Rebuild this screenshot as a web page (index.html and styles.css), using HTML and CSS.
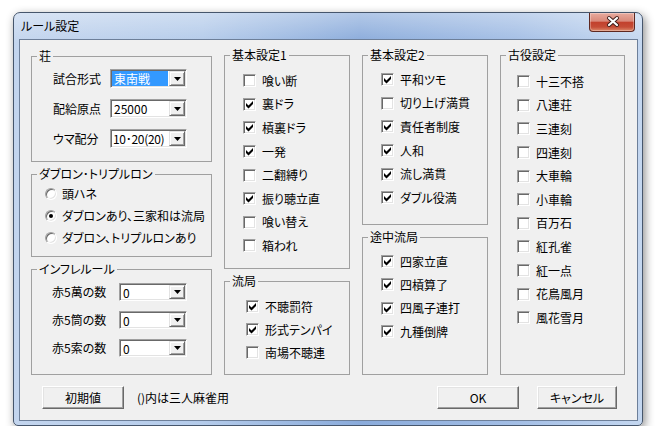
FILE: index.html
```html
<!DOCTYPE html>
<html lang="ja">

<head>
    <meta charset="UTF-8">
    <title>ルール設定</title>
    <link rel="stylesheet" href="styles.css">
</head>

<body>
    <div class="window">
        <div class="titlebar">
            <span class="title">ルール設定</span>
            <div class="close">
                <svg width="46" height="18" viewBox="0 0 46 18">
                    <path d="M19 5 L27 12 M27 5 L19 12" stroke="#3b1a16" stroke-width="4" stroke-linecap="round" fill="none" />
                    <path d="M19 5 L27 12 M27 5 L19 12" stroke="#fff" stroke-width="2.2" stroke-linecap="round" fill="none" />
                </svg>
            </div>
        </div>
        <div class="client">
            <div class="columns">
                <div class="col col-a">
                    <fieldset class="grp grp-so">
                        <legend>荘</legend>
                        <div class="inner combos-so">
                            <div class="field"><span class="lbl">試合形式</span><span class="combo"><span class="val sel">東南戦</span><span class="drop"><svg width="7" height="4"><polygon points="0,0 7,0 3.5,4" /></svg></span></span></div>
                            <div class="field"><span class="lbl">配給原点</span><span class="combo"><span class="val">25000</span><span class="drop"><svg width="7" height="4"><polygon points="0,0 7,0 3.5,4" /></svg></span></span></div>
                            <div class="field"><span class="lbl">ウマ配分</span><span class="combo"><span class="val tight">10･20(20)</span><span class="drop"><svg width="7" height="4"><polygon points="0,0 7,0 3.5,4" /></svg></span></span></div>
                        </div>
                    </fieldset>
                    <fieldset class="grp grp-ron">
                        <legend>ダブロン･トリプルロン</legend>
                        <div class="inner radios">
                            <div class="opt"><span class="rb"></span>頭ハネ</div>
                            <div class="opt"><span class="rb on"><i></i></span>ダブロンあり、三家和は流局</div>
                            <div class="opt"><span class="rb"></span>ダブロン、トリプルロンあり</div>
                        </div>
                    </fieldset>
                    <fieldset class="grp grp-fill">
                        <legend>インフレルール</legend>
                        <div class="inner combos-infl">
                            <div class="field"><span class="lbl">赤5萬の数</span><span class="combo"><span class="val">0</span><span class="drop"><svg width="7" height="4"><polygon points="0,0 7,0 3.5,4" /></svg></span></span></div>
                            <div class="field"><span class="lbl">赤5筒の数</span><span class="combo"><span class="val">0</span><span class="drop"><svg width="7" height="4"><polygon points="0,0 7,0 3.5,4" /></svg></span></span></div>
                            <div class="field"><span class="lbl">赤5索の数</span><span class="combo"><span class="val">0</span><span class="drop"><svg width="7" height="4"><polygon points="0,0 7,0 3.5,4" /></svg></span></span></div>
                        </div>
                    </fieldset>
                </div>

                <div class="col">
                    <fieldset class="grp grp-kihon1">
                        <legend>基本設定1</legend>
                        <div class="inner checks c-kihon1">
                            <div class="opt"><span class="cb"></span>喰い断</div>
                            <div class="opt"><span class="cb"><svg width="9" height="9"><polygon points="1,3 3.5,5.5 8,1 8,4 3.5,8.5 1,6" /></svg></span>裏ドラ</div>
                            <div class="opt"><span class="cb"><svg width="9" height="9"><polygon points="1,3 3.5,5.5 8,1 8,4 3.5,8.5 1,6" /></svg></span>槓裏ドラ</div>
                            <div class="opt"><span class="cb"><svg width="9" height="9"><polygon points="1,3 3.5,5.5 8,1 8,4 3.5,8.5 1,6" /></svg></span>一発</div>
                            <div class="opt"><span class="cb"></span>二翻縛り</div>
                            <div class="opt"><span class="cb"><svg width="9" height="9"><polygon points="1,3 3.5,5.5 8,1 8,4 3.5,8.5 1,6" /></svg></span>振り聴立直</div>
                            <div class="opt"><span class="cb"></span>喰い替え</div>
                            <div class="opt"><span class="cb"></span>箱われ</div>
                        </div>
                    </fieldset>
                    <fieldset class="grp grp-fill">
                        <legend>流局</legend>
                        <div class="inner checks c-ryukyoku">
                            <div class="opt"><span class="cb"><svg width="9" height="9"><polygon points="1,3 3.5,5.5 8,1 8,4 3.5,8.5 1,6" /></svg></span>不聴罰符</div>
                            <div class="opt"><span class="cb"><svg width="9" height="9"><polygon points="1,3 3.5,5.5 8,1 8,4 3.5,8.5 1,6" /></svg></span>形式テンパイ</div>
                            <div class="opt"><span class="cb"></span>南場不聴連</div>
                        </div>
                    </fieldset>
                </div>

                <div class="col">
                    <fieldset class="grp grp-kihon2">
                        <legend>基本設定2</legend>
                        <div class="inner checks c-kihon2">
                            <div class="opt"><span class="cb"><svg width="9" height="9"><polygon points="1,3 3.5,5.5 8,1 8,4 3.5,8.5 1,6" /></svg></span>平和ツモ</div>
                            <div class="opt"><span class="cb"></span>切り上げ満貫</div>
                            <div class="opt"><span class="cb"><svg width="9" height="9"><polygon points="1,3 3.5,5.5 8,1 8,4 3.5,8.5 1,6" /></svg></span>責任者制度</div>
                            <div class="opt"><span class="cb"><svg width="9" height="9"><polygon points="1,3 3.5,5.5 8,1 8,4 3.5,8.5 1,6" /></svg></span>人和</div>
                            <div class="opt"><span class="cb"><svg width="9" height="9"><polygon points="1,3 3.5,5.5 8,1 8,4 3.5,8.5 1,6" /></svg></span>流し満貫</div>
                            <div class="opt"><span class="cb"><svg width="9" height="9"><polygon points="1,3 3.5,5.5 8,1 8,4 3.5,8.5 1,6" /></svg></span>ダブル役満</div>
                        </div>
                    </fieldset>
                    <fieldset class="grp grp-fill">
                        <legend>途中流局</legend>
                        <div class="inner checks c-tochu">
                            <div class="opt"><span class="cb"><svg width="9" height="9"><polygon points="1,3 3.5,5.5 8,1 8,4 3.5,8.5 1,6" /></svg></span>四家立直</div>
                            <div class="opt"><span class="cb"><svg width="9" height="9"><polygon points="1,3 3.5,5.5 8,1 8,4 3.5,8.5 1,6" /></svg></span>四槓算了</div>
                            <div class="opt"><span class="cb"><svg width="9" height="9"><polygon points="1,3 3.5,5.5 8,1 8,4 3.5,8.5 1,6" /></svg></span>四風子連打</div>
                            <div class="opt"><span class="cb"><svg width="9" height="9"><polygon points="1,3 3.5,5.5 8,1 8,4 3.5,8.5 1,6" /></svg></span>九種倒牌</div>
                        </div>
                    </fieldset>
                </div>

                <div class="col col-d">
                    <fieldset class="grp grp-fill">
                        <legend>古役設定</legend>
                        <div class="inner checks c-koyaku">
                            <div class="opt"><span class="cb"></span>十三不搭</div>
                            <div class="opt"><span class="cb"></span>八連荘</div>
                            <div class="opt"><span class="cb"></span>三連刻</div>
                            <div class="opt"><span class="cb"></span>四連刻</div>
                            <div class="opt"><span class="cb"></span>大車輪</div>
                            <div class="opt"><span class="cb"></span>小車輪</div>
                            <div class="opt"><span class="cb"></span>百万石</div>
                            <div class="opt"><span class="cb"></span>紅孔雀</div>
                            <div class="opt"><span class="cb"></span>紅一点</div>
                            <div class="opt"><span class="cb"></span>花鳥風月</div>
                            <div class="opt"><span class="cb"></span>風花雪月</div>
                        </div>
                    </fieldset>
                </div>
            </div>

            <div class="footer">
                <div class="btn">初期値</div>
                <span class="note">()内は三人麻雀用</span>
                <span class="spacer"></span>
                <div class="btn btn-ok">OK</div>
                <div class="btn btn-cancel">キャンセル</div>
            </div>
        </div>
    </div>
</body>

</html>
```

FILE: styles.css
```css
* {
    box-sizing: border-box;
}

body {
    margin: 0;
    background: #fff;
    font-family: "Noto Sans CJK JP", "Noto Sans", sans-serif;
    font-size: 12px;
    font-feature-settings: "palt";
    color: #000;
}

.window {
    margin: 12px 0 0 13px;
    width: 630px;
    height: 414px;
    border: 1px solid #46566c;
    border-radius: 7px 7px 5px 5px;
    padding: 0 4px 4px 5px;
    display: flex;
    flex-direction: column;
    background:
        linear-gradient(180deg, rgba(255, 255, 255, 0.35), rgba(255, 255, 255, 0) 30px),
        linear-gradient(90deg, #c3d5ee 0%, #b4cbea 30%, #8aabdb 55%, #a3bee5 80%, #c4d7f0 100%);
    box-shadow: 2px 3px 10px rgba(0, 0, 0, 0.45);
}

.titlebar {
    height: 26px;
    display: flex;
    justify-content: space-between;
    align-items: center;
    padding-left: 2px;
}

.title {
    line-height: 14px;
}

.close {
    align-self: flex-start;
    margin-right: 3px;
    width: 46px;
    height: 19px;
    border: 1px solid #5e2820;
    border-top: none;
    border-radius: 0 0 4px 4px;
    background: linear-gradient(180deg, #e8ab9e 0%, #d9897a 45%, #c2412d 52%, #c54d37 78%, #dd8b6c 100%);
    box-shadow: inset 0 0 0 1px rgba(255, 255, 255, 0.3);
}

.close svg {
    display: block;
}

.client {
    flex: 1;
    background: #f0f0f0;
    border: 1px solid #6d7f99;
    padding: 8px 12px 11px 11px;
    display: flex;
    flex-direction: column;
}

.columns {
    flex: 1;
    display: flex;
    gap: 12px;
}

.col {
    width: 126px;
    display: flex;
    flex-direction: column;
    gap: 5px;
}

.col-a {
    width: 181px;
    padding-top: 1px;
}

.col-d {
    width: 125px;
}

.grp {
    margin: 0;
    padding: 0;
    min-width: 0;
    border: 1px solid #a0a0a0;
}

.grp legend {
    margin-left: 5px;
    padding: 0 2px;
    line-height: 14px;
}

.grp-so {
    height: 113px;
}

.grp-ron {
    height: 90px;
}

.grp-kihon1 {
    height: 221px;
}

.grp-kihon2 {
    height: 177px;
}

.grp-fill {
    flex: 1;
}

.inner {
    display: flex;
    flex-direction: column;
}

/* combo rows */
.field {
    display: flex;
    align-items: center;
}

.lbl {
    line-height: 14px;
}

.combos-so {
    padding: 6px 0 0 21px;
    gap: 11px;
}

.combos-so .lbl {
    width: 57px;
}

.combos-so .combo {
    width: 77px;
    height: 19px;
}

.combos-infl {
    padding: 7px 0 0 20px;
    gap: 10px;
}

.combos-infl .lbl {
    width: 67px;
}

.combos-infl .combo {
    width: 68px;
    height: 18px;
}

.combo {
    display: flex;
    background: #fff;
    border: 1px solid;
    border-color: #a0a0a0 #fff #fff #a0a0a0;
    box-shadow: inset 1px 1px #696969, inset -1px -1px #e3e3e3;
    padding: 1px;
}

.val {
    flex: 1;
    min-width: 0;
    margin-right: 1px;
    padding-left: 2px;
    display: flex;
    align-items: center;
    line-height: 13px;
    white-space: nowrap;
}

.val.tight {
    padding-left: 1px;
    letter-spacing: -0.3px;
}

.val.sel {
    background: #3399ff;
    color: #fff;
}

.drop {
    flex: none;
    width: 16px;
    background: #f0f0f0;
    border: 1px solid;
    border-color: #e3e3e3 #696969 #696969 #e3e3e3;
    box-shadow: inset 1px 1px #fff, inset -1px -1px #a0a0a0;
    display: flex;
    align-items: center;
    justify-content: center;
}

.drop svg {
    display: block;
    margin-left: 1px;
}

/* radio + check rows */
.opt {
    display: flex;
    align-items: center;
    line-height: 14px;
    white-space: nowrap;
}

.radios {
    padding: 2px 0 0 13px;
}

.radios .opt {
    height: 22px;
}

.rb {
    flex: none;
    width: 12px;
    height: 12px;
    margin-right: 5px;
    border-radius: 50%;
    background: #fff;
    border: 1px solid;
    border-color: #a0a0a0 #fff #fff #a0a0a0;
    box-shadow: inset 1px 1px #696969, inset -1px -1px #e3e3e3;
    display: flex;
    align-items: center;
    justify-content: center;
}

.rb i {
    width: 4px;
    height: 4px;
    border-radius: 50%;
    background: #000;
}

.checks .opt {
    height: 23.6px;
}

.c-kihon1 {
    padding: 7px 0 0 18px;
}

.c-ryukyoku {
    padding: 7px 0 0 21px;
}

.c-ryukyoku .opt {
    height: 23px;
}

.c-kihon2 {
    padding: 6px 0 0 18px;
}

.c-tochu {
    padding: 6px 0 0 18px;
}

.c-tochu .opt {
    height: 23.3px;
}

.c-koyaku {
    padding: 8px 0 0 16px;
}

.cb {
    flex: none;
    width: 13px;
    height: 13px;
    margin-right: 6px;
    padding: 1px;
    background: #fff;
    border: 1px solid;
    border-color: #a0a0a0 #fff #fff #a0a0a0;
    box-shadow: inset 1px 1px #696969, inset -1px -1px #e3e3e3;
}

.cb svg {
    display: block;
}

/* bottom buttons */
.footer {
    height: 23px;
    margin-top: 11px;
    padding: 0 8px 0 11px;
    display: flex;
    align-items: center;
}

.btn {
    width: 82px;
    height: 23px;
    display: flex;
    align-items: center;
    justify-content: center;
    line-height: 14px;
    background: #f0f0f0;
    border: 1px solid;
    border-color: #fff #696969 #696969 #fff;
    box-shadow: inset -1px -1px #a0a0a0, inset 1px 1px #e3e3e3;
}

.note {
    margin-left: 13px;
    line-height: 14px;
}

.spacer {
    flex: 1;
}

.btn-cancel {
    width: 80px;
    margin-left: 18px;
}
```
